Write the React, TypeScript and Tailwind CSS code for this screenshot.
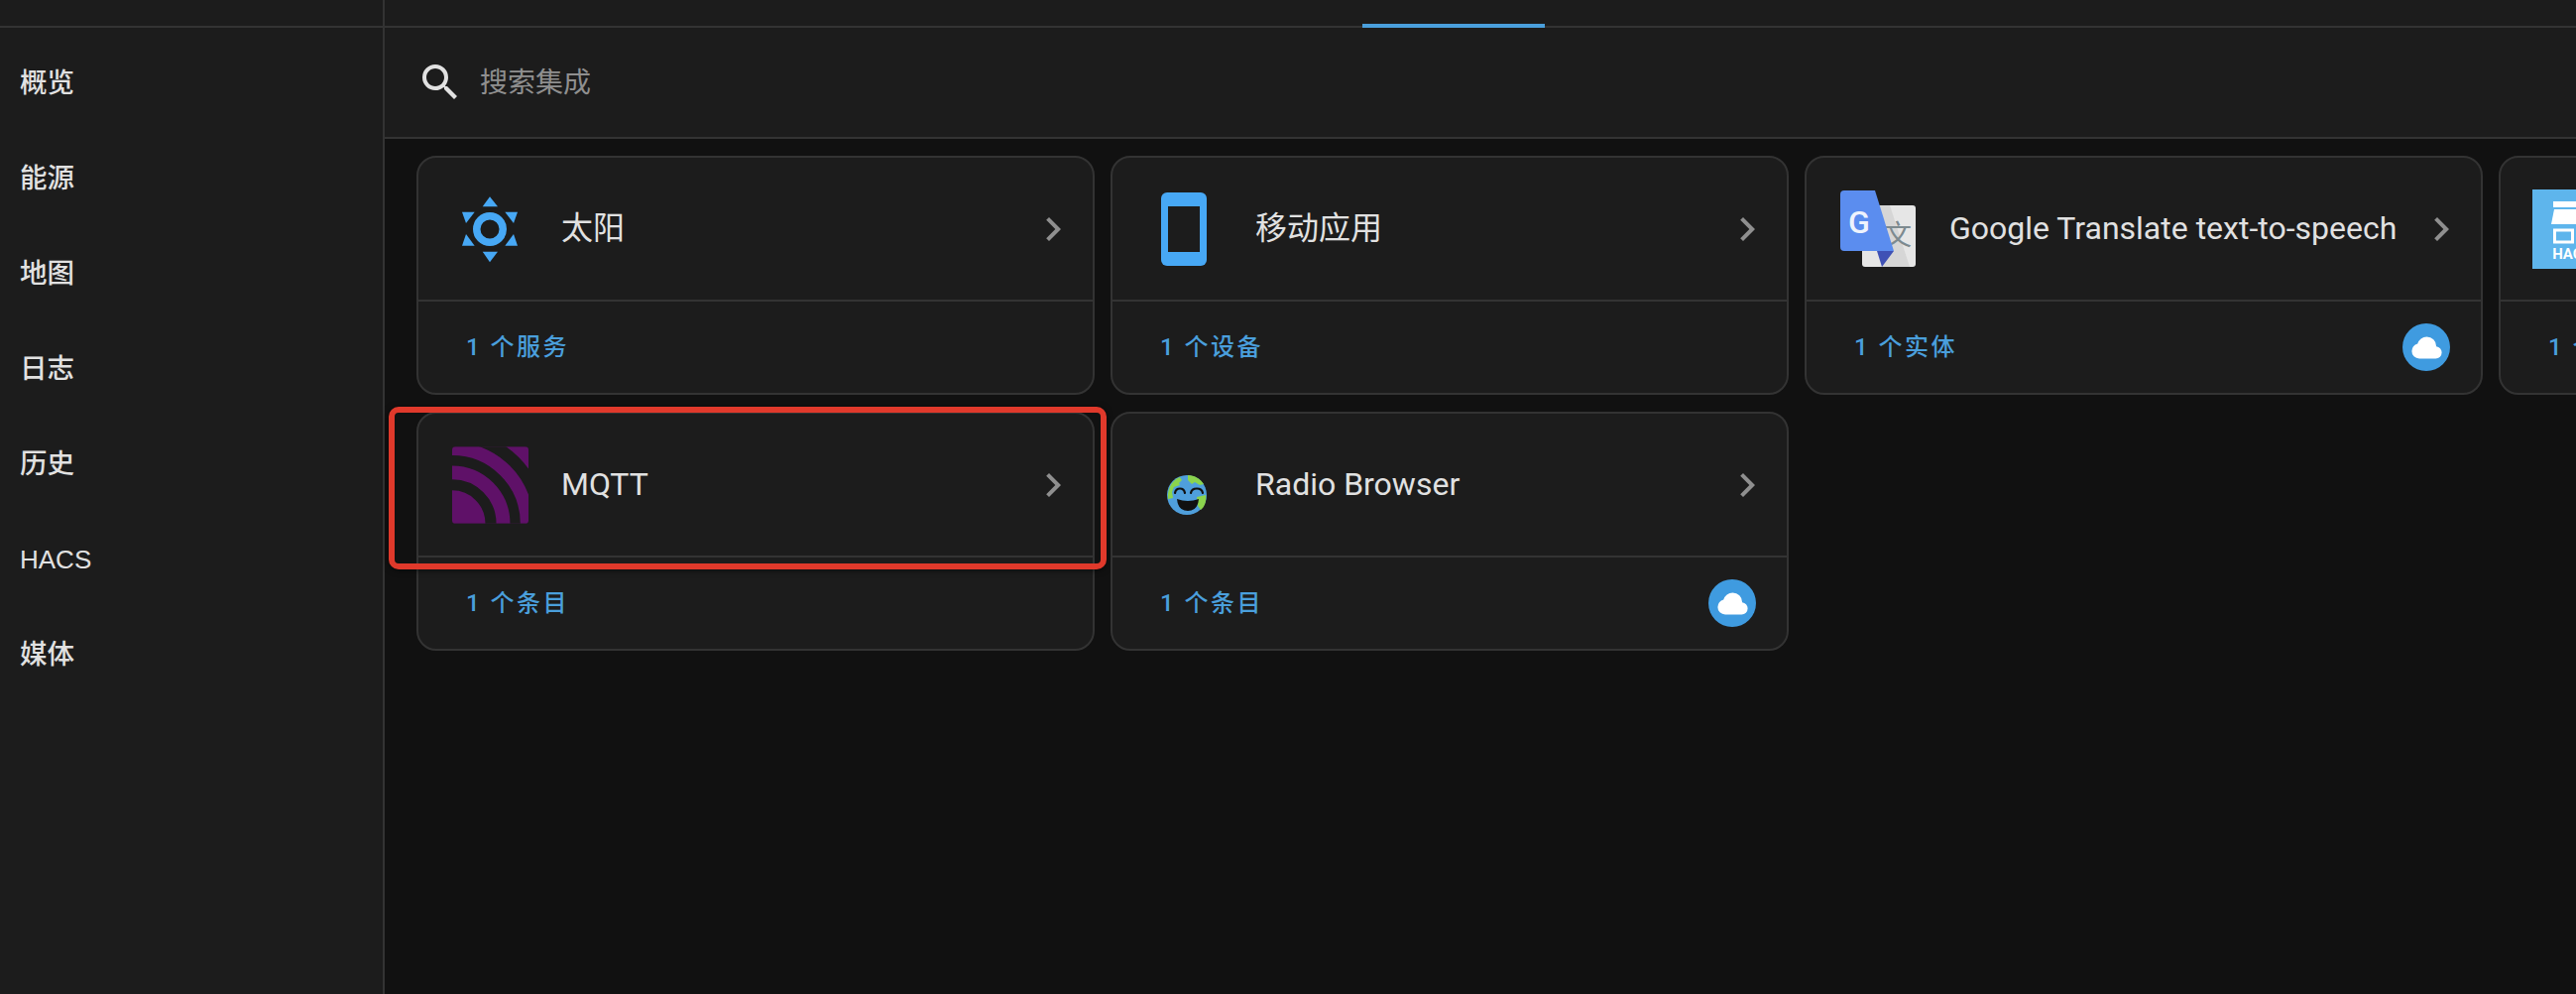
import React from 'react';

const CJK = '"Noto Sans CJK SC"';

const navItems = ['概览', '能源', '地图', '日志', '历史', 'HACS', '媒体'];

const SunIcon = () => (
  <svg viewBox="0 0 70 70" className="w-[70px] h-[70px]" fill="#47a8f5">
    <path d="M27.700 12.300H43L35 2.300z" />
    <path d="M27.700 57.700H43L35 68.300z" />
    <path d="M7 17.700H19.700L11 29z" />
    <path d="M63 17.700H50.300L59 29z" />
    <path d="M7 51.700H19.700L11 40z" />
    <path d="M63 51.700H50.300L59 40z" />
    <circle cx="35" cy="35" r="21" fill="#1c1c1c" />
    <circle cx="35" cy="35" r="13.250" fill="none" stroke="#47a8f5" strokeWidth="7.500" />
  </svg>
);

const PhoneIcon = () => (
  <div className="w-[46px] h-[74px] rounded-[6px] bg-[#47a8f5] px-[7px] pt-[14px] pb-[14px]">
    <div className="w-full h-full bg-[#1c1c1c]" />
  </div>
);

const TranslateIcon = () => (
  <svg viewBox="0 0 76 77" className="w-[76px] h-[77px]">
    <rect x="22" y="15" width="54" height="62" rx="3" fill="#e6e6e6" />
    <path d="M38 15H50L70 77H42z" fill="#d6d6d6" />
    <text x="44" y="55" fontFamily={`${CJK}, sans-serif`} fontSize="28" fill="#7d8a8f">文</text>
    <path d="M37 61H54L42 77z" fill="#3f51b5" />
    <path d="M4 0H35L54 61H4a4 4 0 0 1-4-4V4a4 4 0 0 1 4-4z" fill="#5b8def" />
    <text x="8" y="43" fontFamily="Roboto, sans-serif" fontSize="32" fontWeight="500" fill="#eef3fd">G</text>
  </svg>
);

const HacsIcon = () => (
  <svg viewBox="0 0 80 80" className="w-[80px] h-[80px] shrink-0">
    <rect width="80" height="80" fill="#5eb5ec" />
    <rect x="21" y="12" width="40" height="6" fill="#fff" />
    <path d="M22 20H58L62 35H19z" fill="#fff" />
    <rect x="22.500" y="41" width="18" height="12" fill="none" stroke="#fff" strokeWidth="3" />
    <text x="40" y="70" textAnchor="middle" fontFamily="Roboto, sans-serif" fontWeight="700" fontSize="15" fill="#fff">HACS</text>
  </svg>
);

const MqttIcon = () => (
  <svg viewBox="0 0 230 232" className="w-[77px] h-[78px]">
    <defs>
      <clipPath id="mqtt-clip">
        <rect width="230" height="232" rx="10" />
      </clipPath>
    </defs>
    <g clipPath="url(#mqtt-clip)">
      <rect width="230" height="232" fill="#5f1168" />
      <circle cx="0" cy="232" r="116.500" fill="none" stroke="#1c1c1c" strokeWidth="33" />
      <circle cx="0" cy="232" r="190" fill="none" stroke="#1c1c1c" strokeWidth="31" />
      <circle cx="0" cy="232" r="264.500" fill="none" stroke="#1c1c1c" strokeWidth="37" />
    </g>
  </svg>
);

const EarthIcon = () => (
  <svg viewBox="0 0 40 40" className="w-[40px] h-[40px] mt-[20px] ml-[6px]">
    <circle cx="20" cy="20" r="20" fill="#4f9fdc" />
    <path d="M1 24C0 13 6 4 13 2l2 3-3 3 1 2-6 2-2 5 1 6zM21 0c7 0 13 4 16 9l-4 1-5-3-3 2-4-4zM30 22l9-2c1 6-1 12-5 15l-3-4z" fill="#8bd44d" />
    <path d="M8 18c1-6 9-6 10 0" fill="none" stroke="#111" strokeWidth="2.200" strokeLinecap="round" />
    <path d="M24 18c1-6 11-6 12 0" fill="none" stroke="#111" strokeWidth="2.200" strokeLinecap="round" />
    <path d="M10 24q11 4 22 0q-1 12-11 12T10 24z" fill="#111" />
  </svg>
);

const Chevron = () => (
  <svg viewBox="0 0 24 24" className="w-12 h-12 shrink-0" fill="#8f8f8f">
    <path d="M8.590 16.580L13.170 12L8.590 7.410L10 6l6 6-6 6z" />
  </svg>
);

const CloudBadge = () => (
  <div className="w-12 h-12 rounded-full bg-[#3f9be0] flex items-center justify-center">
    <svg viewBox="0 0 24 24" className="w-[33px] h-[33px]" fill="#fff">
      <path d="M6.500 20Q4.220 20 2.610 18.430 1 16.850 1 14.580 1 12.630 2.170 11.100 3.350 9.570 5.250 9.150 5.880 6.850 7.750 5.430 9.630 4 12 4 14.930 4 16.960 6.040 19 8.070 19 11 20.730 11.200 21.860 12.500 23 13.780 23 15.500 23 17.380 21.690 18.690 20.380 20 18.500 20Z" />
    </svg>
  </div>
);

const IntegrationCard: React.FC<{
  icon: React.ReactNode;
  title?: string;
  footer: string;
  cloud?: boolean;
  highlight?: boolean;
}> = ({ icon, title, footer, cloud, highlight }) => (
  <div className="relative h-[241px] flex flex-col bg-[#1c1c1c] border-2 border-[#333333] rounded-[20px]">
    <div className="h-[145px] flex items-center pl-[32px] pr-[16px] border-b-2 border-[#333333]">
      <div className="w-[80px] shrink-0 flex items-center justify-center">{icon}</div>
      <div className="ml-[32px] pb-[2px] flex-1 whitespace-nowrap text-[32px] text-[#e1e1e1]">{title}</div>
      <Chevron />
    </div>
    <div className="flex-1 flex items-center justify-between pl-[48px] pr-[31px]">
      <span className="text-[24px] font-medium tracking-[2.500px] text-[#4a9fdc]">{footer}</span>
      {cloud && <CloudBadge />}
    </div>
    {/* Red marker drawn over the screenshot */}
    {highlight && (
      <div className="absolute left-[-30px] right-[-14px] top-[-7px] h-[164px] border-[6px] border-[#e0392b] rounded-[10px] shadow-[0_1px_6px_rgba(0,0,0,0.6)]" />
    )}
  </div>
);

export default function App() {
  return (
    <div
      className="flex h-screen overflow-hidden bg-[#111111]"
      style={{ fontFamily: `Roboto, ${CJK}, sans-serif` }}
    >
      <aside className="w-[388px] shrink-0 bg-[#1c1c1c] border-r-2 border-[#333333]">
        <div className="h-[28px] border-b-2 border-[#333333]" />
        <nav className="pt-[8px]">
          {navItems.map((item) => (
            <div
              key={item}
              className={`h-[96px] flex items-center pl-[20px] text-[#e1e1e1] ${item === 'HACS' ? 'text-[26px]' : 'text-[27.500px] font-medium'}`}
              style={{ fontFamily: `"Liberation Sans", ${CJK}, sans-serif` }}
            >
              {item}
            </div>
          ))}
        </nav>
      </aside>

      <main className="flex-1 min-w-0 flex flex-col">
        <div className="h-[28px] shrink-0 flex items-end pl-[986px] bg-[#1c1c1c] border-b-2 border-[#333333]">
          <div className="w-[184px] h-1 -mb-[2px] bg-[#4a9fdc]" />
        </div>
        <div className="h-[112px] shrink-0 flex items-center pl-[32px] bg-[#1c1c1c] border-b-2 border-[#333333]">
          <svg viewBox="0 0 24 24" className="w-12 h-12 shrink-0" fill="#e1e1e1">
            <path d="M9.500,3A6.500,6.500 0 0,1 16,9.500C16,11.110 15.410,12.590 14.440,13.730L14.710,14H15.500L20.500,19L19,20.500L14,15.500V14.710L13.730,14.440C12.590,15.410 11.110,16 9.500,16A6.500,6.500 0 0,1 3,9.500A6.500,6.500 0 0,1 9.500,3M9.500,5C7,5 5,7 5,9.500C5,12 7,14 9.500,14C12,14 14,12 14,9.500C14,7 12,5 9.500,5Z" />
          </svg>
          <span className="ml-[16px] pt-[2px] text-[28px] text-[#8f8f8f]">搜索集成</span>
        </div>

        <div className="pl-[32px] pt-[17px] grid grid-cols-[repeat(4,684px)] gap-x-[16px] gap-y-[17px]">
          <IntegrationCard icon={<SunIcon />} title="太阳" footer="1 个服务" />
          <IntegrationCard icon={<PhoneIcon />} title="移动应用" footer="1 个设备" />
          <IntegrationCard icon={<TranslateIcon />} title="Google Translate text-to-speech" footer="1 个实体" cloud />
          <IntegrationCard icon={<HacsIcon />} title="" footer="1 个集成" />
          <IntegrationCard icon={<MqttIcon />} title="MQTT" footer="1 个条目" highlight />
          <IntegrationCard icon={<EarthIcon />} title="Radio Browser" footer="1 个条目" cloud />
        </div>
      </main>
    </div>
  );
}
